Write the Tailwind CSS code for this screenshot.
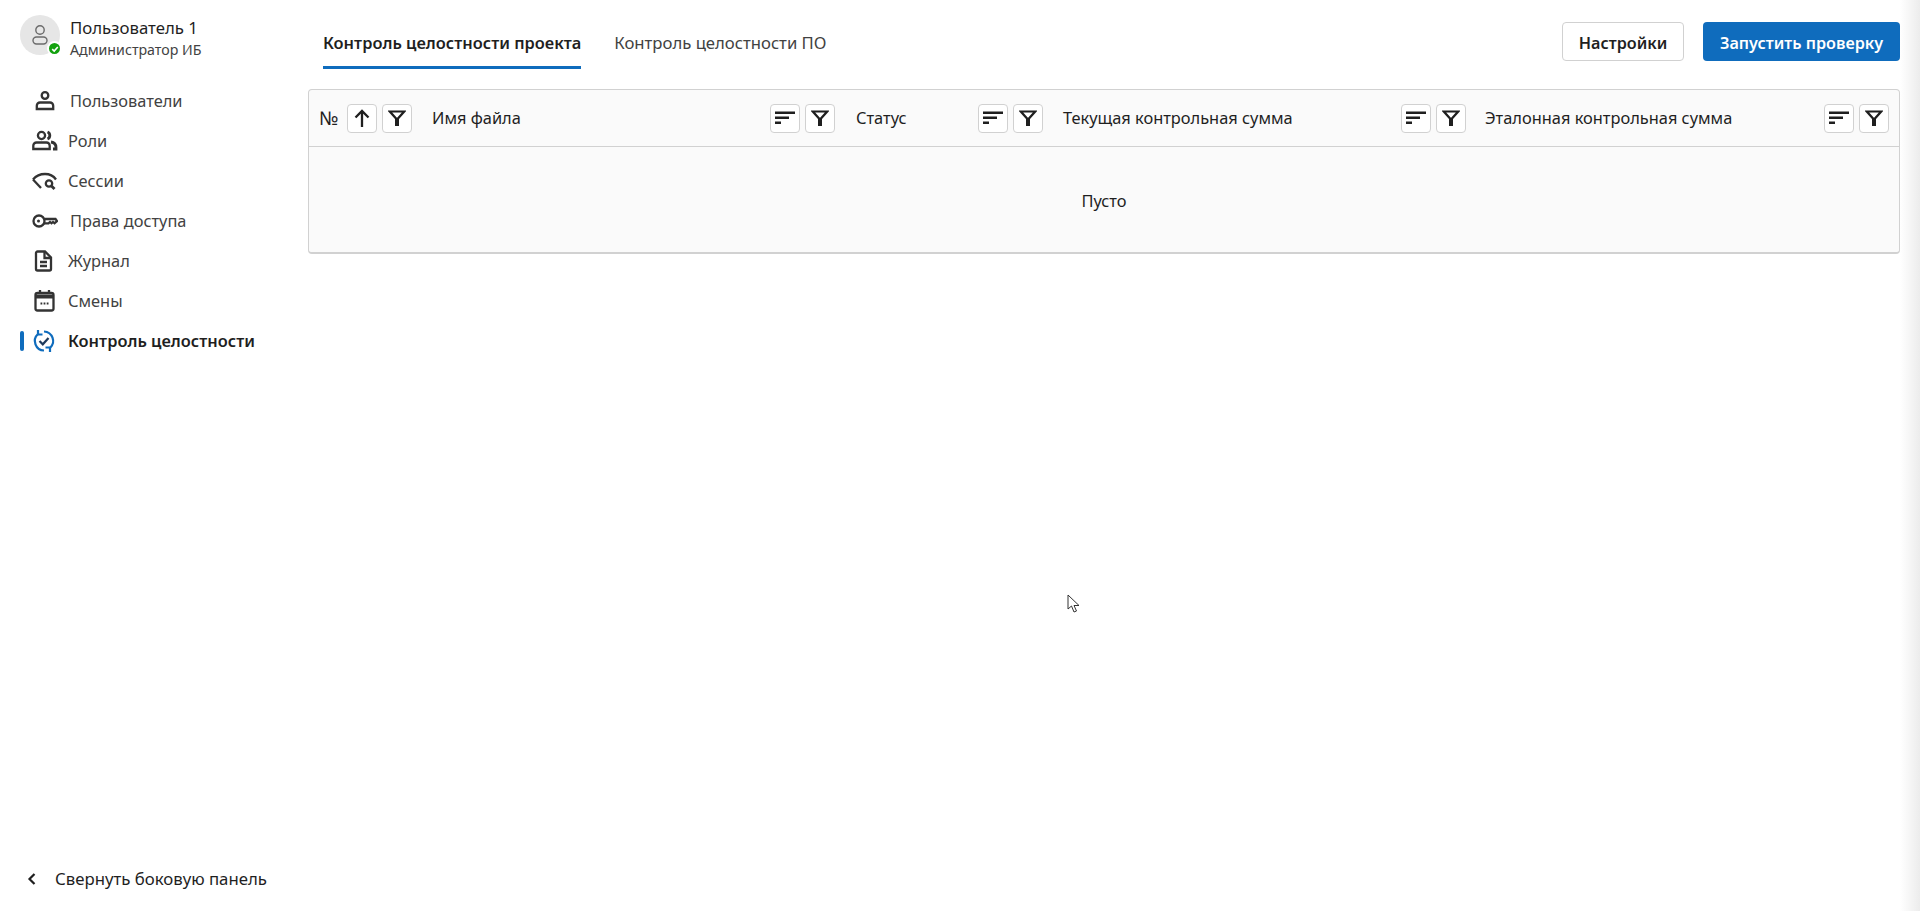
<!DOCTYPE html>
<html lang="ru">
<head>
    <meta charset="UTF-8">
    <title>Контроль целостности</title>
    <script src="https://cdn.jsdelivr.net/npm/@tailwindcss/browser@4"></script>
</head>
<body class="bg-white font-['Noto_Sans',sans-serif] text-[#1f1f1f] overflow-hidden">
<div class="relative flex h-[911px] w-[1920px]">

    <!-- sidebar -->
    <aside class="flex w-[308px] shrink-0 flex-col justify-between pl-[20px]">
        <div>
            <div class="flex items-start gap-[9px] pt-[15px]">
                <div class="relative h-[40px] w-[40px] rounded-full bg-[#e6e6e6]">
                    <svg class="absolute left-[10px] top-[9px]" width="20" height="22" viewBox="0 0 20 22" fill="none" stroke="#6b6b6b" stroke-width="1.4"><circle cx="10" cy="6" r="4.2"/><rect x="3" y="13" width="14" height="7" rx="3.5"/></svg>
                    <div class="absolute left-[27px] top-[26px] flex h-[15px] w-[15px] items-center justify-center rounded-full border-2 border-white bg-[#13a10e]">
                        <svg width="8" height="8" viewBox="0 0 8 8" fill="none" stroke="white" stroke-width="1.6"><path d="M1.2 4.200 3.200 6 6.800 2"/></svg>
                    </div>
                </div>
                <div class="pl-[1px]">
                    <div class="text-[16.8px] leading-[22px] mt-[2px]">Пользователь 1</div>
                    <div class="text-[14.2px] leading-[22px] text-[#424242]">Администратор ИБ</div>
                </div>
            </div>
            <nav class="mt-[24px] flex flex-col gap-[8px] text-[16.4px] text-[#424242]">
                <a class="flex h-[32px] items-center">
                    <span class="w-[8px]"></span>
                    <svg class="ml-[5px]" width="24" height="24" viewBox="0 0 24 24" fill="none" stroke="#333" stroke-width="2.300"><circle cx="12" cy="6.500" r="3.300"/><path d="M7 13.500h10a3.200 3.200 0 0 1 3.200 3.200v3.300H3.800v-3.300A3.200 3.200 0 0 1 7 13.500Z"/></svg>
                    <span class="ml-[13px]">Пользователи</span>
                </a>
                <a class="flex h-[32px] items-center">
                    <span class="w-[11px]"></span>
                    <svg width="27" height="24" viewBox="0 0 27 24" fill="none" stroke="#333" stroke-width="2.300"><circle cx="10.500" cy="6.500" r="3.600"/><path d="M5.500 13.500h10a3.200 3.200 0 0 1 3.200 3.200v3.300H2.300v-3.300a3.200 3.200 0 0 1 3.200-3.200Z"/><path d="M16.500 3a3.800 3.800 0 0 1 0 7" stroke-width="2.800"/><path d="M20 13c3 .500 5 2.500 5 5.500V20h-3" stroke-width="2.800"/></svg>
                    <span class="ml-[10px]">Роли</span>
                </a>
                <a class="flex h-[32px] items-center">
                    <span class="w-[11px]"></span>
                    <svg width="27" height="24" viewBox="0 0 27 24" fill="none" stroke="#333" stroke-width="2.300"><path d="M2 10.500C5 7 9.500 5 14 5s8.500 2 11 5.500"/><path d="M2 10.500l8 8.500"/><circle cx="18" cy="14.500" r="3.200"/><path d="M20.500 17l3 3" stroke-width="2.800"/></svg>
                    <span class="ml-[10px]">Сессии</span>
                </a>
                <a class="flex h-[32px] items-center">
                    <span class="w-[11px]"></span>
                    <svg width="27" height="24" viewBox="0 0 27 24" fill="none" stroke="#333" stroke-width="2.300"><circle cx="8" cy="12" r="5.500"/><circle cx="7.500" cy="12" r="1.500" fill="#333" stroke="none"/><path d="M13.500 10h11l1.500 2-2.500 2.300-1.500-1.300-1.500 1.300-1.500-1.300-1.500 1.300h-4.500"/></svg>
                    <span class="ml-[12px]">Права доступа</span>
                </a>
                <a class="flex h-[32px] items-center">
                    <span class="w-[11px]"></span>
                    <svg width="27" height="24" viewBox="0 0 27 24" fill="none" stroke="#333" stroke-width="2.300"><path d="M6.500 2.500h7.500l6 6V20a1.500 1.500 0 0 1-1.500 1.500h-12A1.500 1.500 0 0 1 5 20V4a1.500 1.500 0 0 1 1.500-1.500Z"/><path d="M13.500 2.500V9H20M9 13h7M9 17h7"/></svg>
                    <span class="ml-[10px]">Журнал</span>
                </a>
                <a class="flex h-[32px] items-center">
                    <span class="w-[11px]"></span>
                    <svg width="27" height="24" viewBox="0 0 27 24" fill="none" stroke="#333" stroke-width="2.300"><rect x="4.500" y="4" width="18" height="17.500" rx="2"/><path d="M4.500 7.500h18" stroke-width="4"/><path d="M9 1v4M18 1v4"/><path d="M9.500 14.500h1.800M12.600 14.500h1.800M15.700 14.500h1.800" stroke-width="2"/></svg>
                    <span class="ml-[10px]">Смены</span>
                </a>
                <a class="flex h-[32px] items-center font-semibold text-[#1f1f1f]">
                    <span class="h-[20px] w-[4px] rounded-[2px] bg-[#0f6cbd]"></span>
                    <svg class="ml-[7px]" width="26" height="24" viewBox="0 0 26 24" fill="none" stroke="#0f6cbd" stroke-width="2.200"><path d="M7 5A9.500 9.500 0 0 0 13 21.500"/><path d="M7 1v4.500h4.500"/><path d="M13 2.500A9.500 9.500 0 0 1 19 19"/><path d="M19 23v-4.500h-4.500"/><path d="M8.500 12l3.300 3.300 5.700-6.300" stroke="#1f3a5c"/></svg>
                    <span class="ml-[11px]">Контроль целостности</span>
                </a>
            </nav>
        </div>
        <div class="mb-[20px] flex h-[24px] items-center text-[16.8px]">
            <svg class="ml-[7px]" width="10" height="14" viewBox="0 0 10 14" fill="none" stroke="#1f1f1f" stroke-width="2.200"><path d="M7.500 2 2.500 7l5 5"/></svg>
            <span class="ml-[18px]">Свернуть боковую панель</span>
        </div>
    </aside>

    <!-- main -->
    <main class="w-[1592px] shrink-0">
        <div class="flex h-[89px] justify-between">
            <div class="flex pl-[15px]">
                <div class="h-[69px] border-b-[3px] border-[#0f6cbd] pt-[32px] text-[16.4px] font-semibold leading-[22px]">Контроль целостности проекта</div>
                <div class="ml-[33px] pt-[32px] text-[16.700px] leading-[22px] text-[#424242]">Контроль целостности ПО</div>
            </div>
            <div class="flex gap-[19px] pt-[22px] text-[16.200px] font-semibold">
                <button class="h-[39px] w-[122px] rounded-[4px] border border-[#d1d1d1] bg-white pt-[3px]">Настройки</button>
                <button class="h-[39px] w-[197px] rounded-[4px] bg-[#0f6cbd] pt-[3px] text-white">Запустить проверку</button>
            </div>
        </div>

        <div class="h-[165px] overflow-hidden rounded-[4px] border border-[#d1d1d1] border-b-2 bg-[#fafafa]">
            <div class="flex h-[57px] items-center border-b border-[#d1d1d1] text-[16.4px]">
                <div class="flex w-[113px] items-center pl-[10px]">
                    <span class="w-[28px] text-[19px]">№</span>
                    <div class="flex gap-[5px]">
                        <button class="flex h-[29px] w-[30px] items-center justify-center rounded-[4px] border border-[#d1d1d1] bg-white"><svg width="20" height="20" viewBox="0 0 20 20" fill="none" stroke="#1f1f1f" stroke-width="2.300"><path d="M10 19V3M3.500 9.500 10 3l6.500 6.500"/></svg></button>
                        <button class="flex h-[29px] w-[30px] items-center justify-center rounded-[4px] border border-[#d1d1d1] bg-white"><svg width="18" height="18" viewBox="0 0 18 18"><path d="M1.800 2.500h14.400L9 10.500Z" fill="none" stroke="#1f1f1f" stroke-width="2.200"/><rect x="7" y="9.500" width="4" height="7.500" fill="#1f1f1f"/></svg></button>
                    </div>
                </div>
                <div class="flex w-[424px] items-center justify-between pl-[10px] pr-[11px]">
                    <span class="pt-[1px]">Имя файла</span>
                    <div class="flex gap-[5px]">
                        <button class="flex h-[29px] w-[30px] items-center justify-center rounded-[4px] border border-[#d1d1d1] bg-white"><svg width="20" height="14" viewBox="0 0 20 14" fill="#1f1f1f"><rect x="0" y=".500" width="20" height="2.500"/><rect x="0" y="5.500" width="14" height="2.500"/><rect x="0" y="10.500" width="6" height="2.500"/></svg></button>
                        <button class="flex h-[29px] w-[30px] items-center justify-center rounded-[4px] border border-[#d1d1d1] bg-white"><svg width="18" height="18" viewBox="0 0 18 18"><path d="M1.800 2.500h14.400L9 10.500Z" fill="none" stroke="#1f1f1f" stroke-width="2.200"/><rect x="7" y="9.500" width="4" height="7.500" fill="#1f1f1f"/></svg></button>
                    </div>
                </div>
                <div class="flex w-[207px] items-center justify-between px-[10px]">
                    <span class="pt-[1px]">Статус</span>
                    <div class="flex gap-[5px]">
                        <button class="flex h-[29px] w-[30px] items-center justify-center rounded-[4px] border border-[#d1d1d1] bg-white"><svg width="20" height="14" viewBox="0 0 20 14" fill="#1f1f1f"><rect x="0" y=".500" width="20" height="2.500"/><rect x="0" y="5.500" width="14" height="2.500"/><rect x="0" y="10.500" width="6" height="2.500"/></svg></button>
                        <button class="flex h-[29px] w-[30px] items-center justify-center rounded-[4px] border border-[#d1d1d1] bg-white"><svg width="18" height="18" viewBox="0 0 18 18"><path d="M1.800 2.500h14.400L9 10.500Z" fill="none" stroke="#1f1f1f" stroke-width="2.200"/><rect x="7" y="9.500" width="4" height="7.500" fill="#1f1f1f"/></svg></button>
                    </div>
                </div>
                <div class="flex w-[422px] items-center justify-between pl-[10px] pr-[9px]">
                    <span class="pt-[1px]">Текущая контрольная сумма</span>
                    <div class="flex gap-[5px]">
                        <button class="flex h-[29px] w-[30px] items-center justify-center rounded-[4px] border border-[#d1d1d1] bg-white"><svg width="20" height="14" viewBox="0 0 20 14" fill="#1f1f1f"><rect x="0" y=".500" width="20" height="2.500"/><rect x="0" y="5.500" width="14" height="2.500"/><rect x="0" y="10.500" width="6" height="2.500"/></svg></button>
                        <button class="flex h-[29px] w-[30px] items-center justify-center rounded-[4px] border border-[#d1d1d1] bg-white"><svg width="18" height="18" viewBox="0 0 18 18"><path d="M1.800 2.500h14.400L9 10.500Z" fill="none" stroke="#1f1f1f" stroke-width="2.200"/><rect x="7" y="9.500" width="4" height="7.500" fill="#1f1f1f"/></svg></button>
                    </div>
                </div>
                <div class="flex w-[424px] items-center justify-between px-[10px]">
                    <span class="pt-[1px]">Эталонная контрольная сумма</span>
                    <div class="flex gap-[5px]">
                        <button class="flex h-[29px] w-[30px] items-center justify-center rounded-[4px] border border-[#d1d1d1] bg-white"><svg width="20" height="14" viewBox="0 0 20 14" fill="#1f1f1f"><rect x="0" y=".500" width="20" height="2.500"/><rect x="0" y="5.500" width="14" height="2.500"/><rect x="0" y="10.500" width="6" height="2.500"/></svg></button>
                        <button class="flex h-[29px] w-[30px] items-center justify-center rounded-[4px] border border-[#d1d1d1] bg-white"><svg width="18" height="18" viewBox="0 0 18 18"><path d="M1.800 2.500h14.400L9 10.500Z" fill="none" stroke="#1f1f1f" stroke-width="2.200"/><rect x="7" y="9.500" width="4" height="7.500" fill="#1f1f1f"/></svg></button>
                    </div>
                </div>
            </div>
            <div class="flex h-[106px] items-center justify-center pt-[2px] text-[16.4px]">Пусто</div>
        </div>
    </main>

    <!-- soft shadow down the right edge -->
    <div class="absolute inset-y-0 right-0 w-[20px] bg-linear-to-r from-white/0 to-[#ececec]"></div>

    <!-- mouse pointer caught in the screenshot -->
    <svg class="absolute left-[1067px] top-[594px]" width="14" height="20" viewBox="0 0 14 20" fill="white" stroke="#333" stroke-width="1"><path d="M1 1v14l3.500-3 2.500 6 2.500-1-2.500-5.500H12Z"/></svg>
</div>
</body>
</html>
